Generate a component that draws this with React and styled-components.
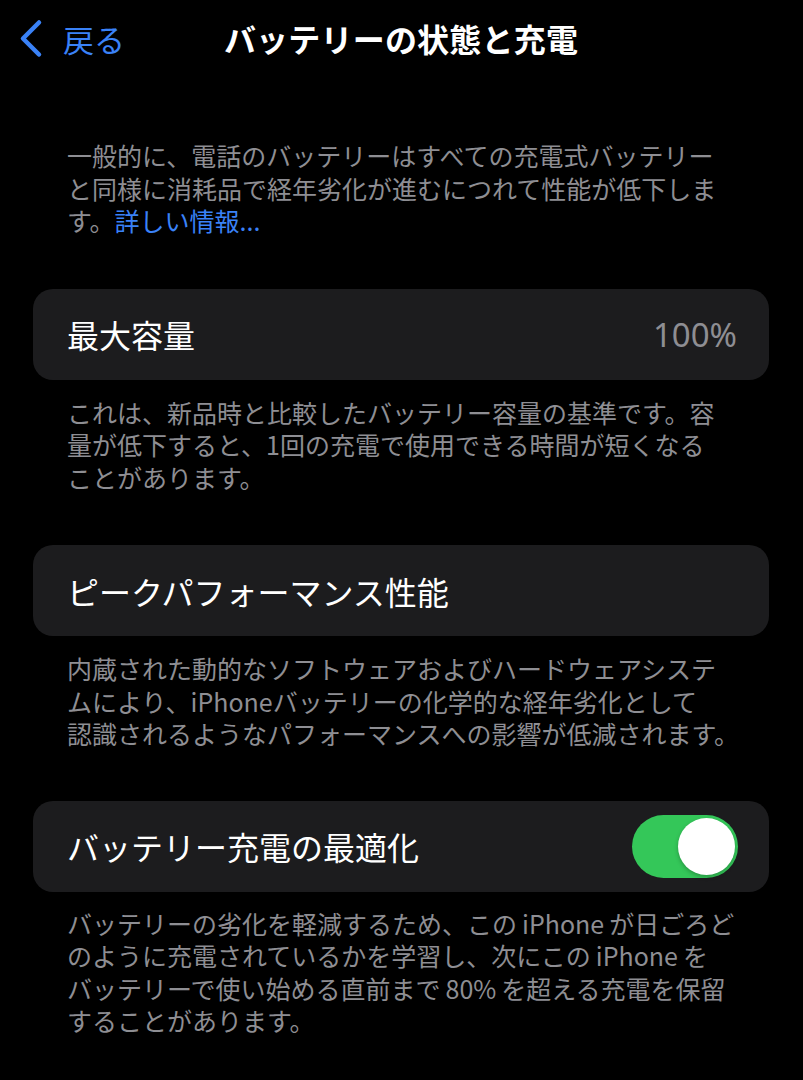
import React, { useState } from "react";
import styled, { createGlobalStyle } from "styled-components";

const GlobalStyle = createGlobalStyle`
  html, body {
    margin: 0;
    padding: 0;
    background: #000;
  }
  body {
    font-family: "Noto Sans CJK JP", "Noto Sans", Inter, sans-serif;
    color: #fff;
    -webkit-font-smoothing: antialiased;
  }
`;

const Screen = styled.div`
  width: 803px;
  min-height: 1080px;
  background: #000;
  padding: 0 34px 0 33px;
  box-sizing: border-box;
`;

const NavBar = styled.header`
  position: relative;
  height: 76px;
  display: flex;
  align-items: center;
  justify-content: center;
  margin: 0 -33px;
`;

const BackButton = styled.button`
  position: absolute;
  left: 18px;
  top: 50%;
  transform: translateY(-50%);
  display: flex;
  align-items: center;
  gap: 19px;
  background: none;
  border: 0;
  padding: 0;
  color: #3a82f7;
  font-family: inherit;
  font-size: 31px;
  cursor: pointer;
`;

const Title = styled.h1`
  margin: 0;
  font-size: 32px;
  font-weight: 700;
  letter-spacing: 0.2px;
`;

const Note = styled.p`
  margin: ${(p) => p.$top || 16}px 0 0;
  padding: 0 34px;
  font-size: 25px;
  line-height: 32.5px;
  color: #8e8e93;
  white-space: nowrap;
`;

const Latin = styled.span`
  margin: 0 5px;
`;

const Link = styled.a`
  color: #3a82f7;
  text-decoration: none;
`;

const Card = styled.div`
  margin-top: ${(p) => p.$top || 52}px;
  height: 91px;
  border-radius: 20px;
  background: #1c1c1e;
  display: flex;
  align-items: center;
  justify-content: space-between;
  padding: 0 33px 0 34px;
  box-sizing: border-box;
`;

const Label = styled.span`
  font-size: 32px;
  color: #fff;
`;

const Value = styled.span`
  font-size: 33px;
  color: #8e8e93;
  font-family: "Noto Sans", Inter, sans-serif;
  margin-right: -1px;
`;

const Switch = styled.button`
  position: relative;
  width: 106px;
  height: 63px;
  border-radius: 32px;
  border: 0;
  padding: 0;
  margin-right: -2px;
  background: ${(p) => (p.$on ? "#34c759" : "#39393d")};
  cursor: pointer;
`;

const Knob = styled.span`
  position: absolute;
  top: 3px;
  left: ${(p) => (p.$on ? "46px" : "3px")};
  width: 57px;
  height: 57px;
  border-radius: 50%;
  background: #fff;
  box-shadow: 0 2px 4px rgba(0, 0, 0, 0.25);
  transition: left 0.2s;
`;

const Chevron = () => (
  <svg width="26" height="38" viewBox="0 0 26 38">
    <path
      d="M21 3 L5 19 L21 35"
      fill="none"
      stroke="#3a82f7"
      strokeWidth="4.5"
      strokeLinecap="round"
      strokeLinejoin="round"
    />
  </svg>
);

const App = () => {
  const [optimized, setOptimized] = useState(true);

  return (
    <Screen>
      <GlobalStyle />
      <NavBar>
        <BackButton>
          <Chevron />
          戻る
        </BackButton>
        <Title>バッテリーの状態と充電</Title>
      </NavBar>

      <Note $top={63}>
        一般的に、電話のバッテリーはすべての充電式バッテリー
        <br />
        と同様に消耗品で経年劣化が進むにつれて性能が低下しま
        <br />
        す。<Link href="#">詳しい情報...</Link>
      </Note>

      <Card>
        <Label>最大容量</Label>
        <Value>100%</Value>
      </Card>
      <Note>
        これは、新品時と比較したバッテリー容量の基準です。容
        <br />
        量が低下すると、1回の充電で使用できる時間が短くなる
        <br />
        ことがあります。
      </Note>

      <Card>
        <Label>ピークパフォーマンス性能</Label>
      </Card>
      <Note>
        内蔵された動的なソフトウェアおよびハードウェアシステ
        <br />
        ムにより、iPhoneバッテリーの化学的な経年劣化として
        <br />
        認識されるようなパフォーマンスへの影響が低減されます。
      </Note>

      <Card $top={51}>
        <Label>バッテリー充電の最適化</Label>
        <Switch $on={optimized} onClick={() => setOptimized(!optimized)}>
          <Knob $on={optimized} />
        </Switch>
      </Card>
      <Note $top={15}>
        バッテリーの劣化を軽減するため、この<Latin>iPhone</Latin>が日ごろど
        <br />
        のように充電されているかを学習し、次にこの<Latin>iPhone</Latin>を
        <br />
        バッテリーで使い始める直前まで<Latin>80%</Latin>を超える充電を保留
        <br />
        することがあります。
      </Note>
    </Screen>
  );
};

export default App;
